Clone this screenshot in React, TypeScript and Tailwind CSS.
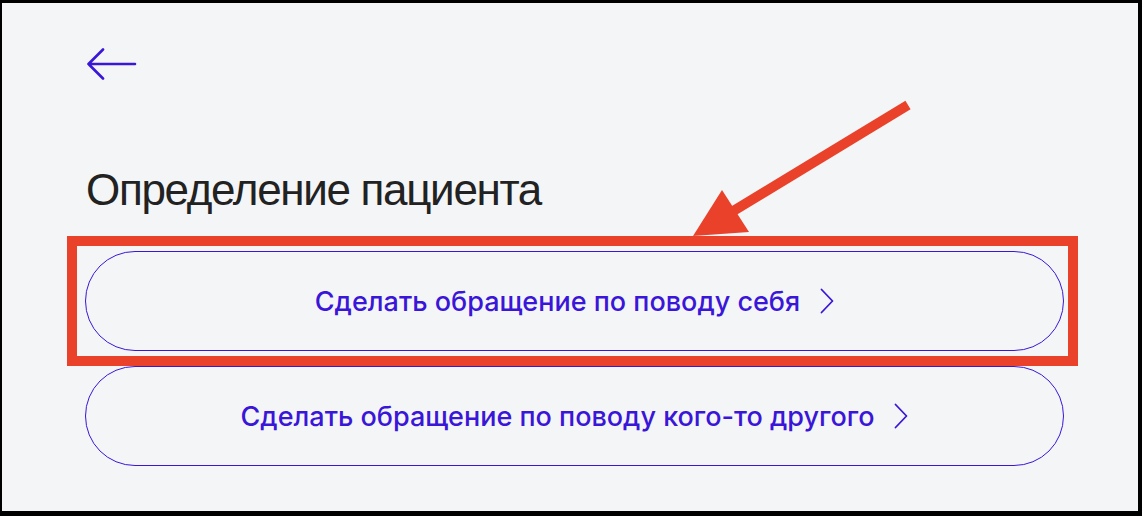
import React from "react";

function Chevron() {
  return (
    <svg width="14" height="26" viewBox="0 0 14 26" fill="none" className="shrink-0">
      <polyline points="1.5,1.5 12.5,13 1.5,24.5" stroke="#3a16d8" strokeWidth="1.8" strokeLinecap="round" strokeLinejoin="round" />
    </svg>
  );
}

function OptionButton({ label }: { label: string }) {
  return (
    <button
      type="button"
      className="flex h-[100px] w-full items-center justify-center gap-[20px] rounded-full border border-[#3a16d8] bg-transparent text-[#3a16d8]"
    >
      <span className="text-[27px] font-medium leading-none" style={{ fontFamily: "Inter, 'Noto Sans', sans-serif" }}>
        {label}
      </span>
      <Chevron />
    </button>
  );
}

export default function App() {
  return (
    <div className="relative h-[516px] w-[1142px] overflow-hidden border-t-[3px] border-l-[2px] border-r-[4px] border-b-[5px] border-black bg-[#f4f5f7]">
      <div className="flex flex-col pl-[83px] pr-[74px] pt-[45px]">
        <svg width="50" height="32" viewBox="0 0 50 32" fill="none" className="ml-[2px]">
          <path d="M1.5 16 H48 M16 1.5 L1.5 16 L16 30.5" stroke="#3a16d8" strokeWidth="2.6" strokeLinecap="round" strokeLinejoin="round" />
        </svg>
        <h1
          className="mt-[88px] ml-[1px] text-[44px] font-normal leading-[44px] tracking-[-0.03em] text-[#222222]"
          style={{ fontFamily: "'Liberation Sans', Arial, sans-serif" }}
        >
          Определение пациента
        </h1>
        <div className="mt-[39px] flex flex-col gap-[15px]">
          <div className="relative">
            <OptionButton label="Сделать обращение по поводу себя" />
            <div className="pointer-events-none absolute -left-[18px] -top-[15px] -right-[14px] -bottom-[15px] border-[10px] border-[#e9412a]" />
          </div>
          <OptionButton label="Сделать обращение по поводу кого-то другого" />
        </div>
      </div>
      <svg className="pointer-events-none absolute left-0 top-0" width="1136" height="508" viewBox="0 0 1136 508">
        <line x1="906" y1="102" x2="728" y2="210" stroke="#e9412a" strokeWidth="10" />
        <polygon points="691,233 720,187 747,229" fill="#e9412a" />
      </svg>
    </div>
  );
}
